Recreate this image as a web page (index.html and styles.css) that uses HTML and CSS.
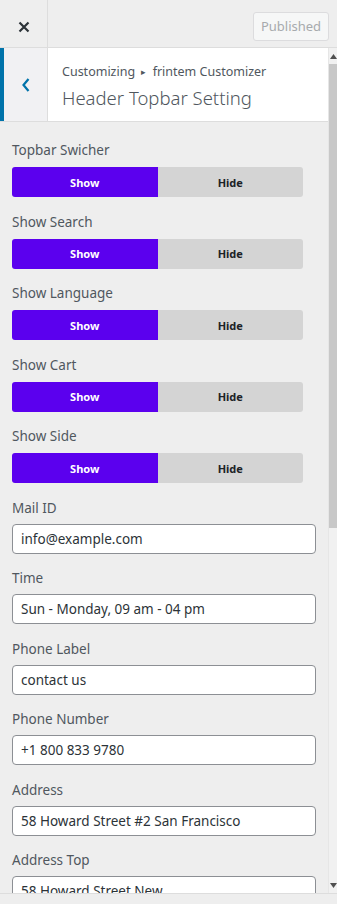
FILE: index.html
```html
<!DOCTYPE html>
<html lang="en">
<head>
    <meta charset="UTF-8">
    <meta name="viewport" content="width=device-width, initial-scale=1.0">
    <title>Customizer - Header Topbar Setting</title>
    <link rel="stylesheet" href="styles.css">
</head>
<body>
<div class="topbar">
    <div class="close-btn">
        <svg width="12" height="12" viewBox="0 0 12 12"><path d="M1.5 1.5 L10.5 10.5 M10.5 1.5 L1.5 10.5" stroke="#2c3338" stroke-width="2.2" fill="none"/></svg>
    </div>
    <div class="spacer"></div>
    <button class="publish-btn">Published</button>
</div>

<div class="pane">
    <div class="pane-content">
        <div class="section-head">
            <div class="back-btn">
                <svg width="10" height="16" viewBox="0 0 10 16"><path d="M7.5 2 L2.5 8 L7.5 14" stroke="#0073aa" stroke-width="2.2" fill="none"/></svg>
            </div>
            <div class="section-title">
                <div class="crumb">Customizing <span class="arrow">&#9656;</span> frintem Customizer</div>
                <h2>Header Topbar Setting</h2>
            </div>
        </div>

        <div class="controls">
            <div class="control toggle-control">
                <label>Topbar Swicher</label>
                <div class="toggle"><span class="on">Show</span><span class="off">Hide</span></div>
            </div>
            <div class="control toggle-control">
                <label>Show Search</label>
                <div class="toggle"><span class="on">Show</span><span class="off">Hide</span></div>
            </div>
            <div class="control toggle-control">
                <label>Show Language</label>
                <div class="toggle"><span class="on">Show</span><span class="off">Hide</span></div>
            </div>
            <div class="control toggle-control">
                <label>Show Cart</label>
                <div class="toggle"><span class="on">Show</span><span class="off">Hide</span></div>
            </div>
            <div class="control toggle-control">
                <label>Show Side</label>
                <div class="toggle"><span class="on">Show</span><span class="off">Hide</span></div>
            </div>

            <div class="control">
                <label>Mail ID</label>
                <input type="text" value="info@example.com">
            </div>
            <div class="control">
                <label>Time</label>
                <input type="text" value="Sun - Monday, 09 am - 04 pm">
            </div>
            <div class="control">
                <label>Phone Label</label>
                <input type="text" value="contact us">
            </div>
            <div class="control">
                <label>Phone Number</label>
                <input type="text" value="+1 800 833 9780">
            </div>
            <div class="control">
                <label>Address</label>
                <input type="text" value="58 Howard Street #2 San Francisco">
            </div>
            <div class="control">
                <label>Address Top</label>
                <input type="text" value="58 Howard Street New">
            </div>
        </div>
    </div>

    <div class="scrollbar">
        <div class="scroll-arrow up"><svg width="7" height="5" viewBox="0 0 7 5"><path d="M0 5 L3.5 0 L7 5 Z" fill="#505050"/></svg></div>
        <div class="scroll-thumb"></div>
        <div class="scroll-track"></div>
        <div class="scroll-arrow down"><svg width="7" height="5" viewBox="0 0 7 5"><path d="M0 0 L3.5 5 L7 0 Z" fill="#505050"/></svg></div>
    </div>
</div>

<div class="footer"></div>
</body>
</html>
```

FILE: styles.css
```css
body {
    margin: 0;
    width: 337px;
    height: 904px;
    overflow: hidden;
    background: #eee;
    font-family: "Noto Sans", "Open Sans", sans-serif;
    color: #50575e;
}

.topbar {
    display: flex;
    height: 47px;
    border-bottom: 1px solid #ddd;
    background: #eee;
}

.close-btn {
    box-sizing: border-box;
    width: 48px;
    padding-top: 6px;
    border-right: 1px solid #ddd;
    display: flex;
    align-items: center;
    justify-content: center;
}

.spacer {
    flex: 1;
}

.publish-btn {
    align-self: center;
    margin: 5px 8px 0 0;
    width: 76px;
    height: 29px;
    padding: 0;
    background: #f6f7f7;
    border: 1px solid #dcdcde;
    border-radius: 3px;
    color: #a7aaad;
    font-family: inherit;
    font-size: 13px;
}

.pane {
    display: flex;
    height: 845px;
}

.pane-content {
    flex: 1;
    overflow: hidden;
}

.section-head {
    display: flex;
    height: 73px;
    background: #fff;
    border-bottom: 1px solid #ddd;
}

.back-btn {
    width: 43px;
    border-left: 4px solid #0073aa;
    border-right: 1px solid #ddd;
    background: #f1f1f3;
    display: flex;
    align-items: center;
    justify-content: center;
}

.section-title {
    padding: 15px 0 0 14px;
}

.crumb {
    font-size: 12.5px;
    line-height: 18px;
    color: #50575e;
}

.crumb .arrow {
    font-size: 9px;
    margin: 0 3px;
    position: relative;
    top: -1px;
}

.section-title h2 {
    margin: 4px 0 0;
    font-size: 18.5px;
    line-height: 24px;
    font-weight: 300;
    color: #50575e;
}

.controls {
    padding: 18px 12px 0;
}

.control {
    margin-bottom: 14.5px;
}

.control label {
    display: block;
    font-size: 13.5px;
    line-height: 20px;
    margin-bottom: 6px;
}

.toggle-control label {
    margin-bottom: 7px;
}

.toggle {
    display: flex;
    width: 291px;
    height: 30px;
    border-radius: 3px;
    overflow: hidden;
    font-size: 11px;
    font-weight: bold;
}

.toggle span {
    flex: 1;
    display: flex;
    align-items: center;
    justify-content: center;
}

.toggle .on {
    background: #5b00ee;
    color: #fff;
}

.toggle .off {
    background: #d4d4d4;
    color: #1d2327;
}

.control input {
    box-sizing: border-box;
    display: block;
    width: 304px;
    height: 30px;
    padding: 0 8px;
    border: 1px solid #8c8f94;
    border-radius: 4px;
    background: #fff;
    color: #2c3338;
    font-family: inherit;
    font-size: 13.5px;
}

.scrollbar {
    width: 8px;
    border-left: 1px solid #e6e6e6;
    background: #f1f1f1;
    display: flex;
    flex-direction: column;
}

.scroll-arrow {
    height: 16px;
    display: flex;
    align-items: center;
    justify-content: center;
}

.scroll-thumb {
    height: 464px;
    background: #c8c8c8;
}

.scroll-track {
    flex: 1;
}

.footer {
    height: 11px;
    border-top: 1px solid #ddd;
    background: #eee;
}
```
